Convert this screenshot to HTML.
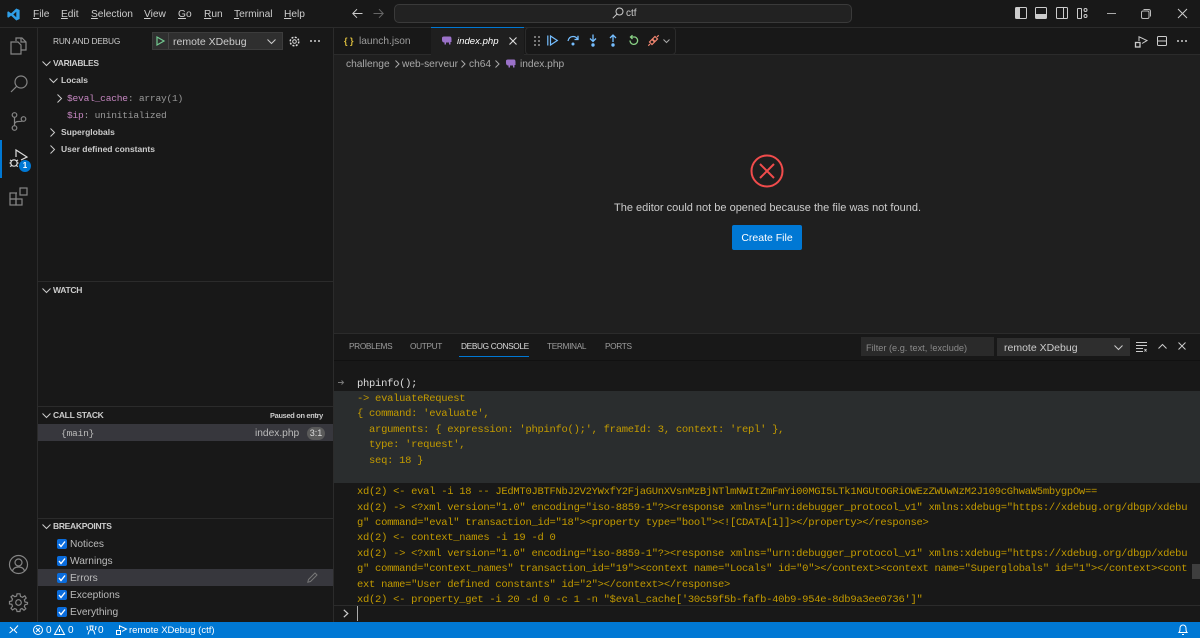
<!DOCTYPE html>
<html><head><meta charset="utf-8">
<style>
html,body{margin:0;padding:0;width:1200px;height:638px;overflow:hidden;background:#181818}
body{position:relative;font-family:"Liberation Sans",sans-serif;font-size:10.2px;color:#ccc}
.t{position:absolute;white-space:nowrap;line-height:16px;height:16px}
.m{font-family:"Liberation Mono",monospace;font-size:9.6px;letter-spacing:-.23px}
.b{position:absolute}
.h{font-weight:bold;font-size:8.5px;letter-spacing:-.3px;color:#ccc}
.l{font-weight:bold;font-size:8.5px;color:#ccc}
.p{font-size:8.3px;letter-spacing:-.35px;color:#9d9d9d}
.n{font-size:10.2px}
.c{position:absolute;left:357px;white-space:pre;font-family:"Liberation Mono",monospace;font-size:10.5px;letter-spacing:-.285px;line-height:16px;height:16px;color:#c29a00}
svg{position:absolute;overflow:visible}
u{text-decoration:underline}
.cb{position:absolute;left:57px;width:10px;height:10px;background:#0a6cdc;border-radius:2px}
</style></head><body>

<!-- main areas -->
<div class="b" style="left:334px;top:54px;width:866px;height:279px;background:#1f1f1f"></div>
<div class="b" style="left:0;top:27px;width:1200px;height:1px;background:#2b2b2b"></div>
<div class="b" style="left:37px;top:27px;width:1px;height:595px;background:#2b2b2b"></div>
<div class="b" style="left:333px;top:27px;width:1px;height:595px;background:#2b2b2b"></div>
<div class="b" style="left:334px;top:54px;width:866px;height:1px;background:#2b2b2b"></div>
<div class="b" style="left:334px;top:333px;width:866px;height:1px;background:#2b2b2b"></div>

<!-- title bar -->
<svg style="left:7px;top:7.500px" width="13" height="13" viewBox="0 0 14 14"><path d="M10 .6 13.600 2.200V11.800L10 13.400 4.400 8.200 1.600 10.400.4 9.800V4.200L1.600 3.600 4.400 5.800ZM10 4 6.800 7 10 10Z" fill="#2f9fe8"/></svg>
<span class="t n" style="left:33px;top:7px"><u>F</u>ile</span>
<span class="t n" style="left:61px;top:7px"><u>E</u>dit</span>
<span class="t n" style="left:91px;top:7px"><u>S</u>election</span>
<span class="t n" style="left:144px;top:7px"><u>V</u>iew</span>
<span class="t n" style="left:178px;top:7px"><u>G</u>o</span>
<span class="t n" style="left:204px;top:7px"><u>R</u>un</span>
<span class="t n" style="left:234px;top:7px"><u>T</u>erminal</span>
<span class="t n" style="left:284px;top:7px"><u>H</u>elp</span>
<svg style="left:352px;top:8px" width="11" height="11" viewBox="0 0 11 11" fill="none" stroke="#ccc"><path d="M10.500 5.500H1M5 1.200.8 5.500 5 9.800"/></svg>
<svg style="left:373px;top:8px" width="11" height="11" viewBox="0 0 11 11" fill="none" stroke="#666"><path d="M.5 5.500H10M6 1.200 10.200 5.500 6 9.800"/></svg>
<div class="b" style="left:394px;top:4px;width:456px;height:17px;background:#222;border:1px solid #3a3a3a;border-radius:5px"></div>
<svg style="left:612px;top:7px" width="12" height="12" viewBox="0 0 12 12" fill="none" stroke="#ccc"><circle cx="7.500" cy="4.500" r="3.500"/><path d="M5 7 .8 11.200"/></svg>
<span class="t" style="left:626px;top:6px;font-size:10px">ctf</span>
<svg style="left:1015px;top:7px" width="12" height="12" viewBox="0 0 12 12"><rect x=".5" y=".5" width="11" height="11" rx="1" fill="none" stroke="#ccc"/><rect x="1" y="1" width="4" height="10" fill="#ccc"/></svg>
<svg style="left:1035px;top:7px" width="12" height="12" viewBox="0 0 12 12"><rect x=".5" y=".5" width="11" height="11" rx="1" fill="none" stroke="#ccc"/><rect x="1" y="7" width="10" height="4" fill="#ccc"/></svg>
<svg style="left:1056px;top:7px" width="12" height="12" viewBox="0 0 12 12" fill="none" stroke="#ccc"><rect x=".5" y=".5" width="11" height="11" rx="1"/><path d="M7.500 1V11"/></svg>
<svg style="left:1077px;top:8px" width="11" height="11" viewBox="0 0 11 11" fill="none" stroke="#ccc"><rect x=".5" y=".5" width="4" height="10" rx=".5"/><circle cx="8.500" cy="2" r="1.500"/><circle cx="8.500" cy="8" r="1.500"/></svg>
<div class="b" style="left:1107px;top:13px;width:9px;height:1px;background:#aaa"></div>
<svg style="left:1141px;top:9px" width="10" height="10" viewBox="0 0 10 10" fill="none" stroke="#bbb"><rect x=".5" y="2" width="7.500" height="7.500" rx="1.500"/><path d="M2.500.5H7.500Q9.500.5 9.500 2.500V7.500"/></svg>
<svg style="left:1178px;top:9px" width="9" height="9" viewBox="0 0 9 9" fill="none" stroke="#ccc"><path d="M0 0 9 9M9 0 0 9"/></svg>

<!-- activity bar -->
<svg style="left:10px;top:37px" width="17" height="18" viewBox="0 0 17 18" fill="none" stroke="#858585" stroke-width="1.200"><path d="M6 4V1H12L16 5V13H11"/><path d="M11 1V5H16"/><path d="M1 5H8L11 8V17H1Z"/></svg>
<svg style="left:10px;top:75px" width="18" height="18" viewBox="0 0 18 18" fill="none" stroke="#858585" stroke-width="1.200"><circle cx="11" cy="7" r="6"/><path d="M6.800 11.200 1 17"/></svg>
<svg style="left:11px;top:112px" width="16" height="19" viewBox="0 0 16 19" fill="none" stroke="#858585" stroke-width="1.200"><circle cx="3.500" cy="3" r="2.300"/><circle cx="3.500" cy="16" r="2.300"/><circle cx="12.500" cy="7" r="2.300"/><path d="M3.500 5.300V13.700M3.500 12Q4 9.500 7.500 9.500 10.500 9.500 11.500 9"/></svg>
<div class="b" style="left:0;top:140px;width:1.500px;height:38px;background:#0078d4"></div>
<svg style="left:9px;top:149px" width="20" height="21" viewBox="0 0 20 21" fill="none" stroke="#ddd" stroke-width="1.200"><path d="M7 8V1L18 8 12 11"/><circle cx="5" cy="14" r="3.200"/><path d="M1 11 3 12M9 11 7 12M.5 14H2M8 14H9.500M1 17.500 3 16.500M9 17.500 7 16.500"/></svg>
<div class="b" style="left:19px;top:160px;width:12px;height:12px;border-radius:50%;background:#0078d4;color:#fff;font-size:8px;font-weight:bold;line-height:12px;text-align:center">1</div>
<svg style="left:9px;top:187px" width="19" height="19" viewBox="0 0 19 19" fill="none" stroke="#858585" stroke-width="1.200"><rect x="1" y="6" width="6" height="6"/><rect x="1" y="12" width="6" height="6"/><rect x="7" y="12" width="6" height="6"/><rect x="11" y="1" width="7" height="7"/><path d="M7 6H8"/></svg>
<svg style="left:9px;top:555px" width="19" height="19" viewBox="0 0 19 19" fill="none" stroke="#858585" stroke-width="1.200"><circle cx="9.500" cy="9.500" r="9"/><circle cx="9.500" cy="7.500" r="3.500"/><path d="M3.500 16Q4.500 12 9.500 12 14.500 12 15.500 16"/></svg>
<svg style="left:9px;top:593px" width="19" height="19" viewBox="0 0 19 19" fill="none" stroke="#858585" stroke-width="1.200"><circle cx="9.500" cy="9.500" r="2.800"/><path d="M8 .8H11L11.500 3.500 13.500 4.300 15.800 2.800 17.200 5 15.300 6.800 16 9 18.500 9.500V11L16 11.700 15.300 13.600 16.800 15.800 15 17.200 13 15.500 11.300 16.300 11 18.500H8L7.500 16.300 5.700 15.500 3.500 17 2 15.200 3.500 13.200 2.800 11.300.5 11V8.500L2.800 8 3.500 6 2 3.800 3.800 2.300 5.800 3.700 7.600 3Z"/></svg>

<!-- sidebar head -->
<span class="t" style="left:53px;top:33px;font-size:8.300px;letter-spacing:-.15px">RUN AND DEBUG</span>
<div class="b" style="left:152px;top:32px;width:131px;height:18px;background:#2f2f2f;outline:1px solid #3c3c3c;outline-offset:-1px"></div>
<div class="b" style="left:168px;top:33px;width:1px;height:16px;background:#444"></div>
<svg style="left:156px;top:36px" width="9" height="10" viewBox="0 0 9 10" fill="none" stroke="#73c991" stroke-width="1.200"><path d="M1 1V9L8 5Z"/></svg>
<span class="t" style="left:173px;top:34px;font-size:10.500px;color:#ccc">remote XDebug</span>
<svg style="left:267px;top:39px" width="9" height="5" viewBox="0 0 9 5" fill="none" stroke="#ccc"><path d="M.5.500 4.500 4.500 8.500.500"/></svg>
<svg style="left:289px;top:36px" width="11" height="11" viewBox="0 0 11 11" fill="none" stroke="#ddd"><circle cx="5.500" cy="5.500" r="1.800"/><circle cx="5.500" cy="5.500" r="4.300" stroke-dasharray="2 1.400" stroke-width="1.500"/></svg>
<svg style="left:310px;top:40px" width="10" height="2" viewBox="0 0 10 2" fill="#ccc"><circle cx="1" cy="1" r="1"/><circle cx="5" cy="1" r="1"/><circle cx="9" cy="1" r="1"/></svg>

<!-- variables -->
<svg style="left:42px;top:61px" width="9" height="5" viewBox="0 0 9 5" fill="none" stroke="#ccc"><path d="M.5.500 4.500 4.500 8.500.500"/></svg>
<span class="t h" style="left:53px;top:55px">VARIABLES</span>
<svg style="left:49px;top:78px" width="9" height="5" viewBox="0 0 9 5" fill="none" stroke="#ccc"><path d="M.5.500 4.500 4.500 8.500.500"/></svg>
<span class="t l" style="left:61px;top:72px">Locals</span>
<svg style="left:57px;top:94px" width="5" height="9" viewBox="0 0 5 9" fill="none" stroke="#ccc"><path d="M.5.500 4.500 4.500.500 8.500"/></svg>
<span class="t m" style="left:67px;top:91px;color:#c586c0">$eval_cache<span style="color:#999">: array(1)</span></span>
<span class="t m" style="left:67px;top:108px;color:#c586c0">$ip<span style="color:#999">: uninitialized</span></span>
<svg style="left:50px;top:128px" width="5" height="9" viewBox="0 0 5 9" fill="none" stroke="#ccc"><path d="M.5.500 4.500 4.500.500 8.500"/></svg>
<span class="t l" style="left:61px;top:124px">Superglobals</span>
<svg style="left:50px;top:145px" width="5" height="9" viewBox="0 0 5 9" fill="none" stroke="#ccc"><path d="M.5.500 4.500 4.500.500 8.500"/></svg>
<span class="t l" style="left:61px;top:141px">User defined constants</span>

<!-- watch -->
<div class="b" style="left:38px;top:281px;width:295px;height:1px;background:#2b2b2b"></div>
<svg style="left:42px;top:288px" width="9" height="5" viewBox="0 0 9 5" fill="none" stroke="#ccc"><path d="M.5.500 4.500 4.500 8.500.500"/></svg>
<span class="t h" style="left:53px;top:282px">WATCH</span>

<!-- call stack -->
<div class="b" style="left:38px;top:406px;width:295px;height:1px;background:#2b2b2b"></div>
<svg style="left:42px;top:413px" width="9" height="5" viewBox="0 0 9 5" fill="none" stroke="#ccc"><path d="M.5.500 4.500 4.500 8.500.500"/></svg>
<span class="t h" style="left:53px;top:407px">CALL STACK</span>
<span class="t" style="left:270px;top:408px;font-size:7.400px;letter-spacing:-.3px;font-weight:bold">Paused on entry</span>
<div class="b" style="left:38px;top:424px;width:295px;height:17px;background:#37373d"></div>
<span class="t m" style="left:61px;top:426px;color:#bbb">{main}</span>
<span class="t n" style="left:255px;top:426px;color:#bbb">index.php</span>
<div class="b" style="left:307px;top:427px;width:18px;height:13px;border-radius:7px;background:#5a5a5a;color:#ddd;font-size:9px;line-height:13px;text-align:center">3:1</div>

<!-- breakpoints -->
<div class="b" style="left:38px;top:518px;width:295px;height:1px;background:#2b2b2b"></div>
<svg style="left:42px;top:524px" width="9" height="5" viewBox="0 0 9 5" fill="none" stroke="#ccc"><path d="M.5.500 4.500 4.500 8.500.500"/></svg>
<span class="t h" style="left:53px;top:518px">BREAKPOINTS</span>
<div class="b" style="left:38px;top:569px;width:295px;height:17px;background:#37373d"></div>
<div class="cb" style="top:539px"></div><span class="t n" style="left:70px;top:537px;color:#bbb">Notices</span>
<div class="cb" style="top:556px"></div><span class="t n" style="left:70px;top:554px;color:#bbb">Warnings</span>
<div class="cb" style="top:573px"></div><span class="t n" style="left:70px;top:571px;color:#bbb">Errors</span>
<div class="cb" style="top:590px"></div><span class="t n" style="left:70px;top:588px;color:#bbb">Exceptions</span>
<div class="cb" style="top:607px"></div><span class="t n" style="left:70px;top:605px;color:#bbb">Everything</span>
<svg style="left:57px;top:539px" width="10" height="78" viewBox="0 0 10 78" fill="none" stroke="#fff" stroke-width="1.400"><path d="M2 5 4 7.500 8 2.500M2 22 4 24.500 8 19.500M2 39 4 41.500 8 36.500M2 56 4 58.500 8 53.500M2 73 4 75.500 8 70.500"/></svg>
<svg style="left:307px;top:572px" width="11" height="11" viewBox="0 0 11 11" fill="none" stroke="#777"><path d="M.8 10.200 1.500 7.500 8 1 10 3 3.500 9.500Z"/></svg>

<!-- tabs -->
<span class="t" style="left:344px;top:33px;font-size:9px;font-weight:bold;color:#d7ba3d">{ }</span>
<span class="t n" style="left:359px;top:34px;color:#9d9d9d">launch.json</span>
<div class="b" style="left:431px;top:27px;width:93px;height:28px;background:#1f1f1f;border-top:1px solid #0078d4;box-sizing:border-box"></div>
<svg style="left:441px;top:36px" width="11" height="9" viewBox="0 0 11 9"><path d="M1 2Q1 .5 3 .5H9Q10.500 .5 10.500 3V6H9.500V8.500H8V6.500H5V8.500H3.500V6.500Q1 6.500 1 4Z" fill="#9b72c9"/></svg>
<span class="t" style="left:457px;top:34px;font-size:9.600px;font-style:italic;color:#fff">index.php</span>
<svg style="left:509px;top:37px" width="8" height="8" viewBox="0 0 8 8" fill="none" stroke="#ddd" stroke-width="1.100"><path d="M.5.500 7.500 7.500M7.500.500.500 7.500"/></svg>

<!-- debug toolbar -->
<div class="b" style="left:525px;top:27px;width:149px;height:26px;background:#181818;border:1px solid #2b2b2b;border-radius:4px"></div>
<svg style="left:534px;top:36px" width="6" height="10" viewBox="0 0 6 10" fill="#777"><rect x="0" y="0" width="2" height="2"/><rect x="4" y="0" width="2" height="2"/><rect x="0" y="4" width="2" height="2"/><rect x="4" y="4" width="2" height="2"/><rect x="0" y="8" width="2" height="2"/><rect x="4" y="8" width="2" height="2"/></svg>
<svg style="left:547px;top:35px" width="11" height="11" viewBox="0 0 11 11" fill="none" stroke="#75beff" stroke-width="1.200"><path d="M.8.500V10.500M3.500 1V10L10.300 5.500Z"/></svg>
<svg style="left:567px;top:35px" width="12" height="11" viewBox="0 0 12 11" fill="none" stroke="#75beff" stroke-width="1.300"><path d="M1 6Q2 1.500 6 1.500 9 1.500 10.500 4M11 .8V4.500H7.500"/><circle cx="6" cy="9" r="1.500" fill="#75beff" stroke="none"/></svg>
<svg style="left:589px;top:34px" width="8" height="13" viewBox="0 0 8 13" fill="none" stroke="#75beff" stroke-width="1.300"><path d="M4 .5V7M1 4.500 4 7.500 7 4.500"/><circle cx="4" cy="11" r="1.700" fill="#75beff" stroke="none"/></svg>
<svg style="left:609px;top:34px" width="8" height="13" viewBox="0 0 8 13" fill="none" stroke="#75beff" stroke-width="1.300"><path d="M4 8V1M1 4 4 1 7 4"/><circle cx="4" cy="11" r="1.700" fill="#75beff" stroke="none"/></svg>
<svg style="left:628px;top:35px" width="11" height="11" viewBox="0 0 11 11" fill="none" stroke="#89d185" stroke-width="1.300"><path d="M3 2H7A3.800 3.800 0 1 1 2 5.500M4.500 .2 2.500 2 4.500 4"/></svg>
<svg style="left:648px;top:35px" width="11" height="11" viewBox="0 0 11 11" fill="none" stroke="#f48771" stroke-width="1.200"><path d="M7 1.500 9.500 4 7 6.500 4.500 4ZM4 4.500 6.500 7 4 9.500 1.500 7ZM.3 10.700 2 9M9 2 10.700.3M5 6 6 5"/></svg>
<svg style="left:663px;top:39px" width="7" height="4" viewBox="0 0 7 4" fill="none" stroke="#aaa"><path d="M.5.500 3.500 3.500 6.500.500"/></svg>

<!-- editor actions -->
<svg style="left:1135px;top:36px" width="13" height="12" viewBox="0 0 13 12" fill="none" stroke="#ccc"><path d="M4 5V.8L12 4.500 7 7.500"/><rect x=".5" y="6.500" width="4.500" height="4.500" stroke-width="1.300"/></svg>
<svg style="left:1157px;top:36px" width="10" height="10" viewBox="0 0 10 10" fill="none" stroke="#ccc"><rect x=".5" y=".5" width="9" height="9" rx="1"/><path d="M0 5H10"/></svg>
<svg style="left:1177px;top:40px" width="10" height="2" viewBox="0 0 10 2" fill="#ccc"><circle cx="1" cy="1" r="1"/><circle cx="5" cy="1" r="1"/><circle cx="9" cy="1" r="1"/></svg>

<!-- breadcrumbs -->
<span class="t n" style="left:346px;top:57px;color:#a9a9a9">challenge</span>
<svg style="left:395px;top:60px" width="5" height="8" viewBox="0 0 5 8" fill="none" stroke="#aaa"><path d="M.5.500 4 4 .5 7.500"/></svg>
<span class="t n" style="left:402px;top:57px;color:#a9a9a9">web-serveur</span>
<svg style="left:461px;top:60px" width="5" height="8" viewBox="0 0 5 8" fill="none" stroke="#aaa"><path d="M.5.500 4 4 .5 7.500"/></svg>
<span class="t n" style="left:469px;top:57px;color:#a9a9a9">ch64</span>
<svg style="left:495px;top:60px" width="5" height="8" viewBox="0 0 5 8" fill="none" stroke="#aaa"><path d="M.5.500 4 4 .5 7.500"/></svg>
<svg style="left:505px;top:59px" width="11" height="9" viewBox="0 0 11 9"><path d="M1 2Q1 .5 3 .5H9Q10.500 .5 10.500 3V6H9.500V8.500H8V6.500H5V8.500H3.500V6.500Q1 6.500 1 4Z" fill="#9b72c9"/></svg>
<span class="t n" style="left:520px;top:57px;color:#a9a9a9">index.php</span>

<!-- editor placeholder -->
<svg style="left:750px;top:154px" width="34" height="34" viewBox="0 0 34 34" fill="none" stroke="#f14c4c" stroke-width="2"><circle cx="17" cy="17" r="15.500"/><path d="M10 10 24 24M24 10 10 24"/></svg>
<span class="t" style="left:614px;top:200px;font-size:11px;color:#ccc">The editor could not be opened because the file was not found.</span>
<div class="b" style="left:732px;top:225px;width:70px;height:25px;background:#0078d4;border-radius:2px;color:#fff;font-size:10.500px;line-height:26px;text-align:center">Create File</div>

<!-- panel header -->
<span class="t p" style="left:349px;top:338px">PROBLEMS</span>
<span class="t p" style="left:410px;top:338px">OUTPUT</span>
<span class="t p" style="left:461px;top:338px;color:#ddd">DEBUG CONSOLE</span>
<div class="b" style="left:459px;top:356px;width:70px;height:1px;background:#0078d4"></div>
<span class="t p" style="left:547px;top:338px">TERMINAL</span>
<span class="t p" style="left:605px;top:338px">PORTS</span>
<div class="b" style="left:861px;top:337px;width:133px;height:19px;background:#2a2a2a"></div>
<span class="t" style="left:866px;top:340px;font-size:9.200px;color:#8a8a8a">Filter (e.g. text, !exclude)</span>
<div class="b" style="left:997px;top:338px;width:133px;height:18px;background:#2e2e2e"></div>
<span class="t" style="left:1004px;top:340px;font-size:10.500px;color:#ccc">remote XDebug</span>
<svg style="left:1114px;top:345px" width="9" height="5" viewBox="0 0 9 5" fill="none" stroke="#ccc"><path d="M.5.500 4.500 4.500 8.500.500"/></svg>
<svg style="left:1136px;top:342px" width="11" height="10" viewBox="0 0 11 10" fill="none" stroke="#ccc"><path d="M0 .5H11M0 3.500H11M0 6.500H7M0 9.500H7M8.500 7 10.500 9.500M10.500 7 8.500 9.500"/></svg>
<svg style="left:1158px;top:344px" width="9" height="5" viewBox="0 0 9 5" fill="none" stroke="#ccc"><path d="M.5 4.500 4.500.500 8.500 4.500"/></svg>
<svg style="left:1178px;top:342px" width="8" height="8" viewBox="0 0 8 8" fill="none" stroke="#ccc"><path d="M.5.500 7.500 7.500M7.500.500.500 7.500"/></svg>
<div class="b" style="left:334px;top:360px;width:866px;height:1px;background:#111"></div>

<!-- console -->
<svg style="left:338px;top:380px" width="6" height="5" viewBox="0 0 6 5" fill="none" stroke="#777"><path d="M0 2.500H5.500M3.500 .5 5.500 2.500 3.500 4.500"/></svg>
<span class="c" style="top:376px;color:#ddd">phpinfo();</span>
<div class="b" style="left:334px;top:391px;width:866px;height:92px;background:#2a2d2e"></div>
<span class="c" style="top:391px">-&gt; evaluateRequest</span>
<span class="c" style="top:406px">{ command: 'evaluate',</span>
<span class="c" style="top:422px">  arguments: { expression: 'phpinfo();', frameId: 3, context: 'repl' },</span>
<span class="c" style="top:437px">  type: 'request',</span>
<span class="c" style="top:453px">  seq: 18 }</span>
<span class="c" style="top:484px">xd(2) &lt;- eval -i 18 -- JEdMT0JBTFNbJ2V2YWxfY2FjaGUnXVsnMzBjNTlmNWItZmFmYi00MGI5LTk1NGUtOGRiOWEzZWUwNzM2J109cGhwaW5mbygpOw==</span>
<span class="c" style="top:500px">xd(2) -&gt; &lt;?xml version="1.0" encoding="iso-8859-1"?&gt;&lt;response xmlns="urn:debugger_protocol_v1" xmlns:xdebug="https://xdebug.org/dbgp/xdebu</span>
<span class="c" style="top:515px">g" command="eval" transaction_id="18"&gt;&lt;property type="bool"&gt;&lt;![CDATA[1]]&gt;&lt;/property&gt;&lt;/response&gt;</span>
<span class="c" style="top:530px">xd(2) &lt;- context_names -i 19 -d 0</span>
<span class="c" style="top:546px">xd(2) -&gt; &lt;?xml version="1.0" encoding="iso-8859-1"?&gt;&lt;response xmlns="urn:debugger_protocol_v1" xmlns:xdebug="https://xdebug.org/dbgp/xdebu</span>
<span class="c" style="top:561px">g" command="context_names" transaction_id="19"&gt;&lt;context name="Locals" id="0"&gt;&lt;/context&gt;&lt;context name="Superglobals" id="1"&gt;&lt;/context&gt;&lt;cont</span>
<span class="c" style="top:577px">ext name="User defined constants" id="2"&gt;&lt;/context&gt;&lt;/response&gt;</span>
<span class="c" style="top:592px;height:13px;overflow:hidden">xd(2) &lt;- property_get -i 20 -d 0 -c 1 -n "$eval_cache['30c59f5b-fafb-40b9-954e-8db9a3ee0736']"</span>
<div class="b" style="left:1192px;top:564px;width:8px;height:15px;background:#3e3e3e"></div>
<div class="b" style="left:334px;top:605px;width:866px;height:1px;background:#2b2b2b"></div>
<svg style="left:343px;top:609px" width="6" height="9" viewBox="0 0 6 9" fill="none" stroke="#ccc" stroke-width="1.200"><path d="M.8.800 4.800 4.500.8 8.200"/></svg>
<div class="b" style="left:357px;top:606px;width:1px;height:15px;background:#aaa"></div>

<!-- status bar -->
<div class="b" style="left:0;top:622px;width:1200px;height:16px;background:#0078d4"></div>
<svg style="left:9px;top:625px" width="10" height="10" viewBox="0 0 10 10" fill="none" stroke="#fff"><path d="M.5 8 4 5 1 2M9 .5 5 5 8 8"/></svg>
<svg style="left:33px;top:625px" width="10" height="10" viewBox="0 0 10 10" fill="none" stroke="#fff"><circle cx="5" cy="5" r="4.500"/><path d="M3 3 7 7M7 3 3 7"/></svg>
<span class="t" style="left:46px;top:623px;font-size:10px;color:#fff">0</span>
<svg style="left:54px;top:625px" width="11" height="10" viewBox="0 0 11 10" fill="none" stroke="#fff"><path d="M5.500.5 10.500 9.500H.5ZM5.500 4V7"/></svg>
<span class="t" style="left:68px;top:623px;font-size:10px;color:#fff">0</span>
<svg style="left:86px;top:625px" width="11" height="10" viewBox="0 0 11 10" fill="none" stroke="#fff"><path d="M3.500 5 2 9.500M7.500 5 9 9.500M1 1 1.500 5M10 1 9.500 5M4 1H7L6.500 5H4.500Z"/></svg>
<span class="t" style="left:98px;top:623px;font-size:10px;color:#fff">0</span>
<svg style="left:116px;top:625px" width="11" height="11" viewBox="0 0 11 11" fill="none" stroke="#fff"><path d="M3.500 4V.8L10.500 4 6 6.500"/><rect x=".5" y="5.500" width="4" height="4"/></svg>
<span class="t" style="left:129px;top:623px;font-size:9.500px;color:#fff">remote XDebug (ctf)</span>
<svg style="left:1178px;top:624px" width="10" height="12" viewBox="0 0 10 12" fill="none" stroke="#fff"><path d="M1 8.500Q2 7.500 2 5V4A3 3 0 0 1 8 4V5Q8 7.500 9 8.500ZM4 10.500H6"/></svg>
</body></html>
